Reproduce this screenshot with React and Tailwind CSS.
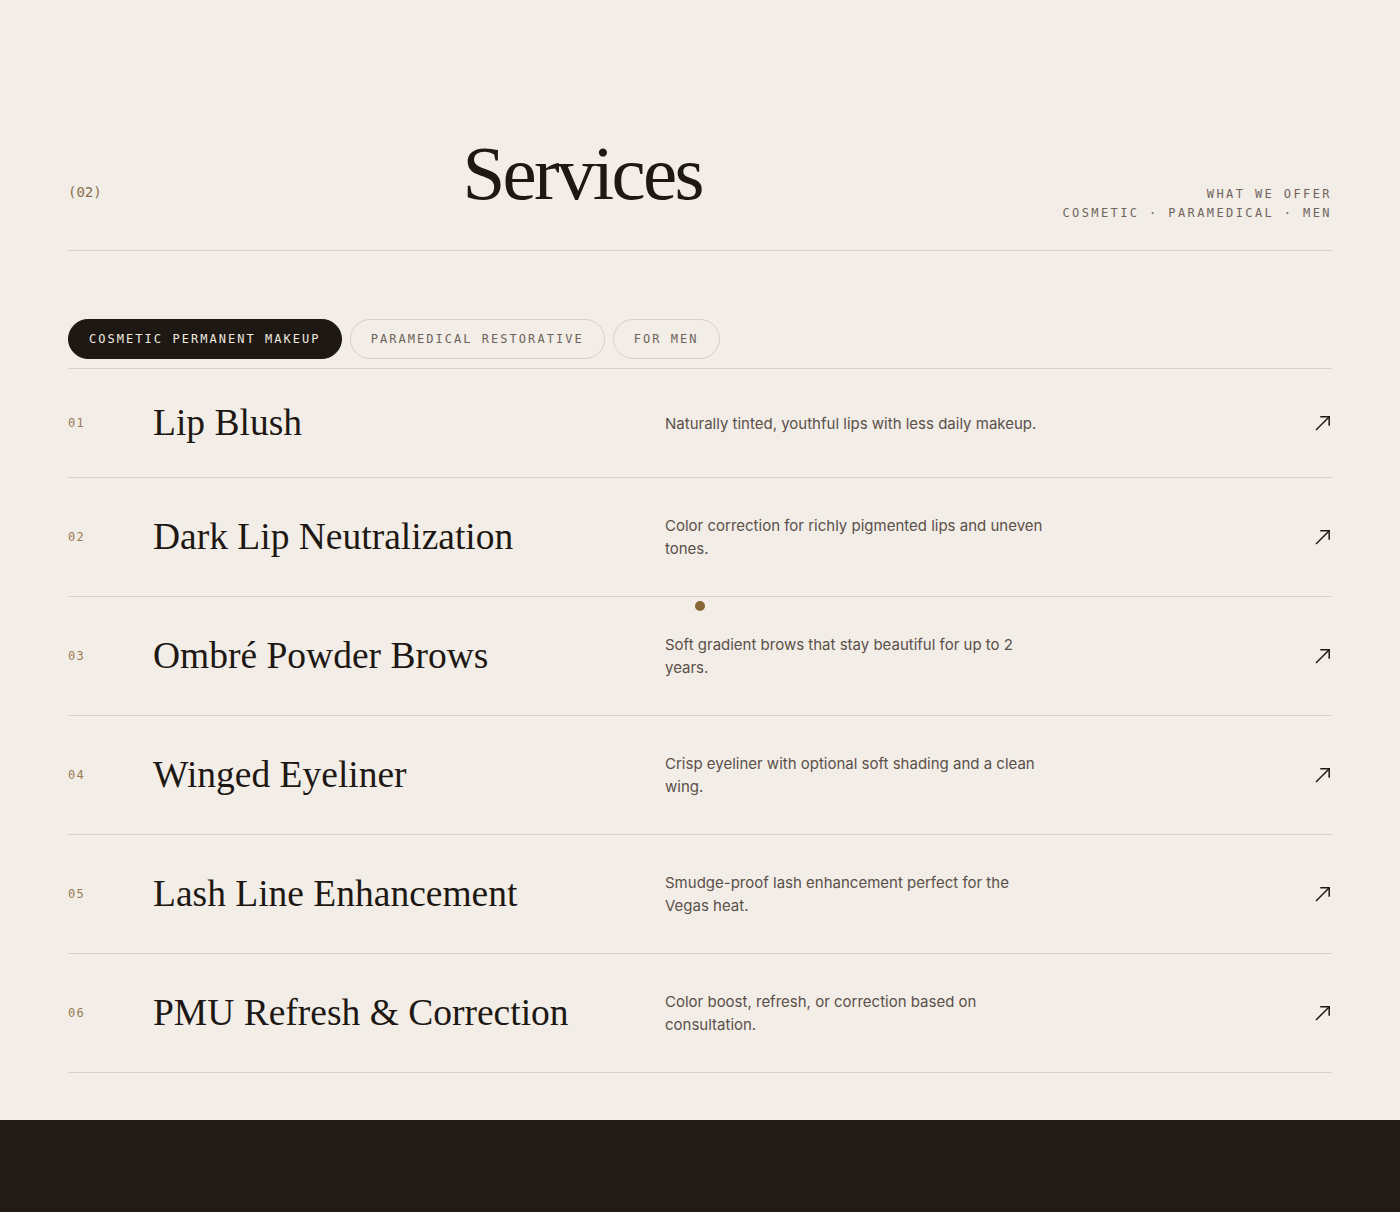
import React, { useState } from 'react';

const services = [
  { n: '01', title: 'Lip Blush', desc: 'Naturally tinted, youthful lips with less daily makeup.' },
  { n: '02', title: 'Dark Lip Neutralization', desc: 'Color correction for richly pigmented lips and uneven tones.' },
  { n: '03', title: 'Ombré Powder Brows', desc: 'Soft gradient brows that stay beautiful for up to 2 years.' },
  { n: '04', title: 'Winged Eyeliner', desc: 'Crisp eyeliner with optional soft shading and a clean wing.' },
  { n: '05', title: 'Lash Line Enhancement', desc: 'Smudge-proof lash enhancement perfect for the Vegas heat.' },
  { n: '06', title: 'PMU Refresh & Correction', desc: 'Color boost, refresh, or correction based on consultation.' },
];

const tabs = ['Cosmetic Permanent Makeup', 'Paramedical Restorative', 'For Men'];

const mono = "font-['DejaVu_Sans_Mono','Liberation_Mono',monospace]";
const serif = "font-['Liberation_Serif','Times_New_Roman',serif]";

const Arrow = () => (
  <svg width="18" height="18" viewBox="0 0 18 18" fill="none" stroke="#1e1814" strokeWidth="1.5" strokeLinecap="square">
    <path d="M2.5 15.5 15 3" />
    <path d="M7 2.8h8.2V11" />
  </svg>
);

export default function App() {
  const [active, setActive] = useState(0);

  return (
    <div className="min-h-screen bg-[#f2ede6] font-['Inter',sans-serif]">
      <section className="relative px-[68px] pt-[135px] pb-[47px]">
        {/* Section header */}
        <div className="flex items-end justify-between border-b border-[#d6d0c8] pb-[27px]">
          <span className={`${mono} mb-[20px] text-[14px] text-[#8c6f4f]`}>(02)</span>
          <h2 className={`${serif} mb-[11px] text-[77px] leading-none tracking-[-0.035em] text-[#1e1814]`}>Services</h2>
          <div className={`${mono} text-right text-[12px] leading-[19px] tracking-[0.2em] text-[#6f655e]`}>
            <div>WHAT WE OFFER</div>
            <div>COSMETIC · PARAMEDICAL · MEN</div>
          </div>
        </div>

        {/* Category tabs */}
        <div className="mt-[68px] flex gap-2 border-b border-[#d6d0c8] pb-[9px]">
          {tabs.map((t, i) => (
            <button
              key={t}
              type="button"
              onClick={() => setActive(i)}
              className={`${mono} h-10 rounded-full px-5 text-[12px] uppercase tracking-[0.17em] ${
                active === i
                  ? 'bg-[#1e1814] text-[#efe8df] border border-[#1e1814]'
                  : 'border border-[#d6cfc6] text-[#6e645c]'
              }`}
            >
              {t}
            </button>
          ))}
        </div>

        {/* Service list */}
        <ul>
          {services.map((s) => (
            <li
              key={s.n}
              className="grid grid-cols-[85px_512px_1fr_auto] items-center border-b border-[#d6d0c8] py-9"
            >
              <span className={`${mono} text-[12px] tracking-[0.1em] text-[#9a7a55]`}>{s.n}</span>
              <h3 className={`${serif} text-[37.5px] leading-[36px] text-[#1e1814]`}>{s.title}</h3>
              <p className="max-w-[382px] text-[15px] leading-[23px] text-[#5b504a]">{s.desc}</p>
              <Arrow />
            </li>
          ))}
        </ul>

        {/* cursor dot */}
        <span className="absolute left-[695px] top-[601px] h-[10px] w-[10px] rounded-full bg-[#8a6535]" />
      </section>

      <footer className="h-[180px] bg-[#211a15]" />
    </div>
  );
}
